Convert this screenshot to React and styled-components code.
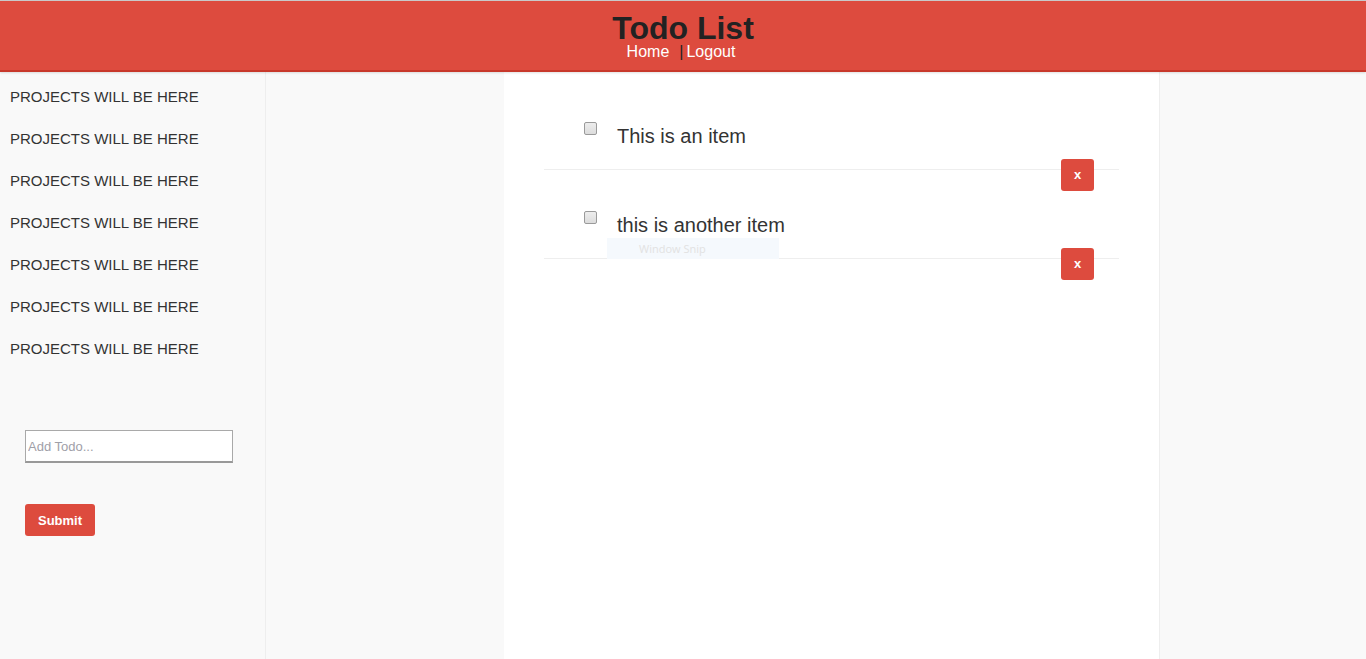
import React from "react";
import styled, { createGlobalStyle } from "styled-components";

const GlobalStyle = createGlobalStyle`
  html, body {
    margin: 0;
    padding: 0;
    background: #f9f9f9;
    font-family: "Liberation Sans", Arial, sans-serif;
    color: #333;
  }
  * { box-sizing: border-box; }
`;

const Header = styled.header`
  height: 72px;
  background-color: #dd4b3e;
  border-top: 1px solid #c9c9c9;
  border-bottom: 2px solid #c8382b;
  box-shadow: 0 1px 2px rgba(0, 0, 0, 0.12);
  display: flex;
  flex-direction: column;
  align-items: center;
  position: relative;
  z-index: 1;
`;

const Title = styled.h1`
  margin: 11px 0 0;
  height: 32px;
  font-size: 32px;
  line-height: 32px;
  font-weight: 700;
  color: #222;
  overflow: visible;
`;

const Nav = styled.nav`
  font-size: 16px;
  line-height: 16px;
  height: 16px;
  display: flex;
  align-items: center;
  margin-right: 4px;
`;

const NavLink = styled.a`
  display: inline-block;
  color: #fff;
  text-decoration: none;
  margin: ${(p) => p.$margin || "0"};
`;

const Divider = styled.span`
  display: inline-block;
  color: #222;
`;

const Layout = styled.div`
  display: flex;
  min-height: calc(100vh - 72px);
`;

const Sidebar = styled.aside`
  width: 266px;
  flex-shrink: 0;
  background: #f9f9f9;
  border-right: 1px solid #eee;
  padding-top: 16px;
`;

const ProjectItem = styled.div`
  font-size: 15px;
  line-height: 18px;
  color: #333;
  padding-left: 10px;
  margin-bottom: 24px;
`;

const AddForm = styled.form`
  padding: 48px 0 0 25px;
  display: flex;
  flex-direction: column;
  align-items: flex-start;
`;

const TodoInput = styled.input`
  width: 208px;
  height: 33px;
  border: 1px solid #a9a9a9;
  border-bottom: 2px solid #999;
  padding: 0 2px;
  font-family: "Liberation Sans", Arial, sans-serif;
  font-size: 13px;
  background: #fff;
  &::placeholder {
    color: #a0a0a8;
  }
`;

const SubmitButton = styled.button`
  margin-top: 41px;
  width: 70px;
  height: 32px;
  background: #dd4b3e;
  color: #fff;
  border: none;
  border-radius: 3px;
  font-family: "Liberation Sans", Arial, sans-serif;
  font-weight: 700;
  font-size: 13px;
`;

const Gutter = styled.div`
  width: 238px;
  flex-shrink: 0;
`;

const Main = styled.main`
  width: 656px;
  flex-shrink: 0;
  background: #fff;
  border-right: 1px solid #eee;
  padding: 9px 40px 0;
  position: relative;
`;

const Row = styled.div`
  position: relative;
  height: 89px;
  border-bottom: 1px solid #eee;
  display: flex;
  align-items: flex-start;
  padding: 41px 0 0 40px;
`;

const Check = styled.input`
  appearance: none;
  width: 13px;
  height: 13px;
  margin: 0;
  border: 1px solid #9a9a9a;
  border-radius: 2px;
  background: linear-gradient(#ededed, #dcdcdc);
`;

const ItemText = styled.span`
  font-size: 20px;
  line-height: 24px;
  color: #333;
  margin: 2px 0 0 20px;
`;

const DeleteButton = styled.button`
  position: absolute;
  right: 25px;
  bottom: -22px;
  width: 33px;
  height: 32px;
  background: #dd4b3e;
  color: #fff;
  border: none;
  border-radius: 3px;
  font-family: "Liberation Sans", Arial, sans-serif;
  font-weight: 700;
  font-size: 13px;
  line-height: 1;
  padding: 0 0 2px;
  z-index: 1;
`;

const SnipLabel = styled.div`
  position: absolute;
  left: 103px;
  top: 166px;
  width: 172px;
  height: 21px;
  background: #f5f9fd;
  color: #e2e2e2;
  font-family: "Open Sans", sans-serif;
  font-size: 11px;
  line-height: 21px;
  padding-left: 32px;
`;

const Filler = styled.div`
  flex: 1;
`;

const items = ["This is an item", "this is another item"];

const App = () => (
  <>
    <GlobalStyle />
    <Header>
      <Title>Todo List</Title>
      <Nav>
        <NavLink href="#" $margin="0 10px 0 0">Home</NavLink>
        <Divider>|</Divider>
        <NavLink href="#" $margin="0 0 0 3px">Logout</NavLink>
      </Nav>
    </Header>
    <Layout>
      <Sidebar>
        {Array.from({ length: 7 }).map((_, i) => (
          <ProjectItem key={i}>PROJECTS WILL BE HERE</ProjectItem>
        ))}
        <AddForm onSubmit={(e) => e.preventDefault()}>
          <TodoInput placeholder="Add Todo..." />
          <SubmitButton type="submit">Submit</SubmitButton>
        </AddForm>
      </Sidebar>
      <Gutter />
      <Main>
        {items.map((text) => (
          <Row key={text}>
            <Check type="checkbox" />
            <ItemText>{text}</ItemText>
            <DeleteButton>x</DeleteButton>
          </Row>
        ))}
        <SnipLabel>Window Snip</SnipLabel>
      </Main>
      <Filler />
    </Layout>
  </>
);

export default App;
